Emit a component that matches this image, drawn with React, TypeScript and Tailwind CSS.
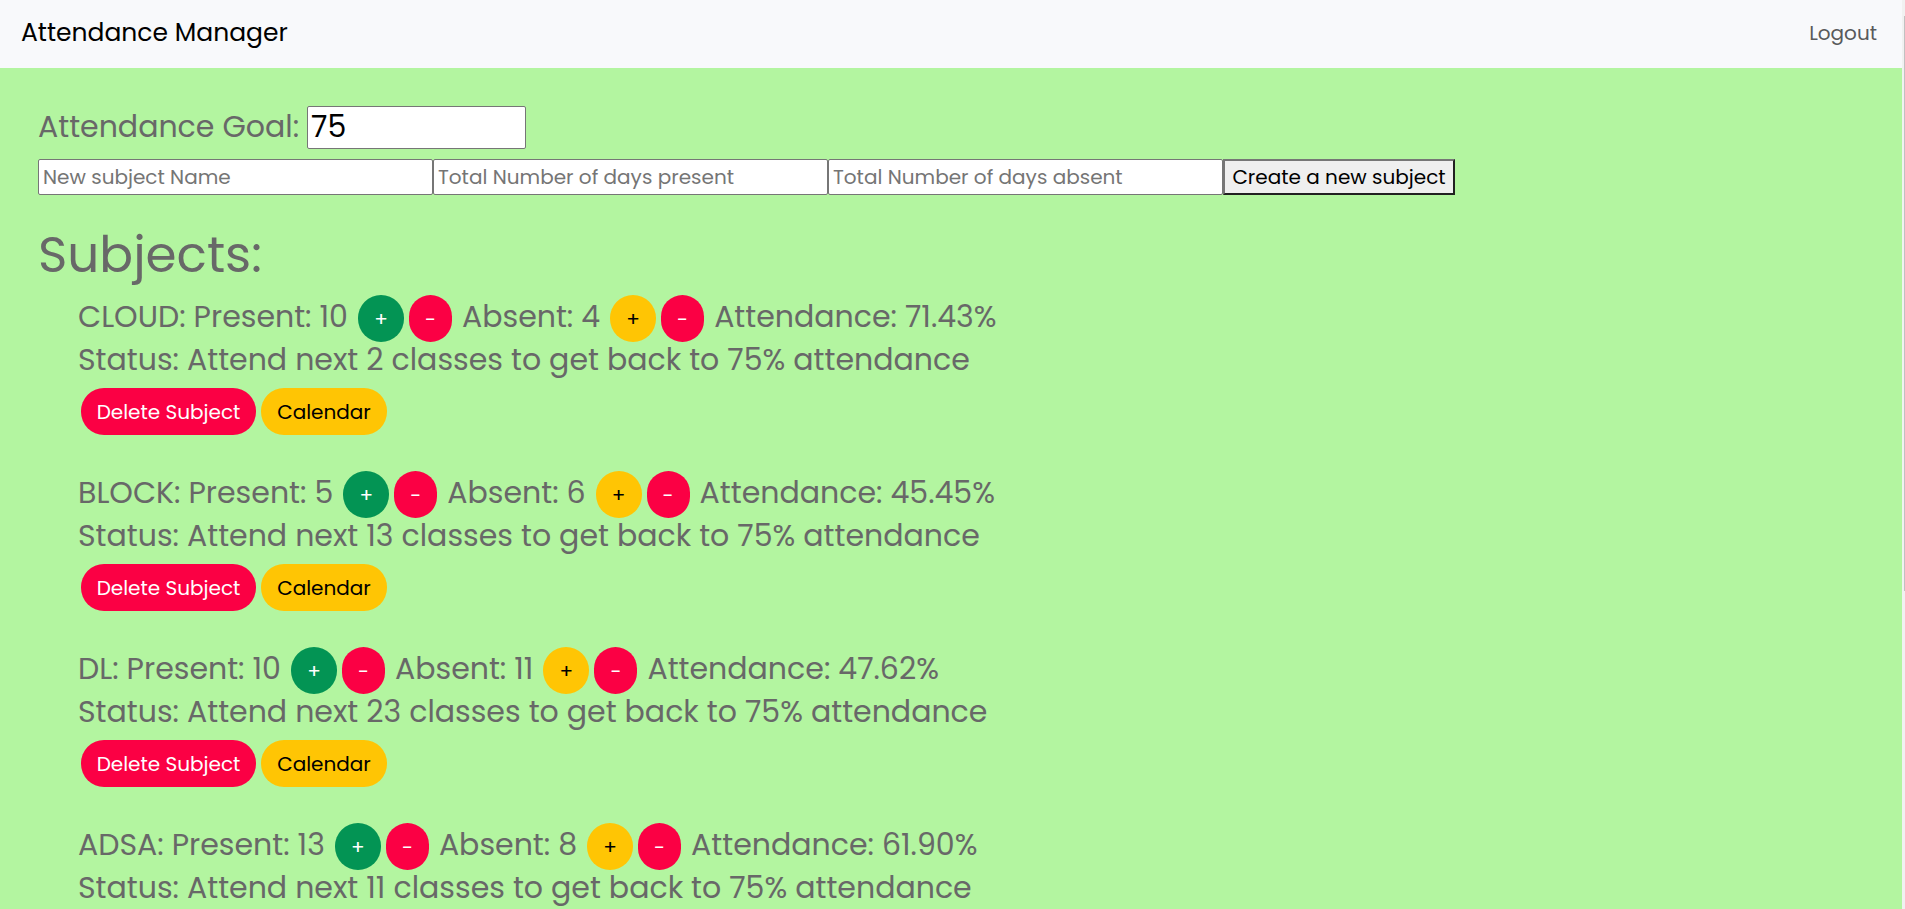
import { useState } from "react";

type Subject = { name: string; present: number; absent: number };

const initialSubjects: Subject[] = [
  { name: "CLOUD", present: 10, absent: 4 },
  { name: "BLOCK", present: 5, absent: 6 },
  { name: "DL", present: 10, absent: 11 },
  { name: "ADSA", present: 13, absent: 8 },
];

const pill = "h-[47px] shrink-0 rounded-[23px] text-xl leading-none";
const field =
  "h-[36px] w-[395px] rounded-[2px] border border-[#767676] bg-white px-1 text-xl text-black placeholder:text-[#757575]";

function statusText(s: Subject, goal: number) {
  const needed = Math.ceil(
    (goal * (s.present + s.absent) - 100 * s.present) / (100 - goal),
  );
  return needed > 0
    ? `Attend next ${needed} classes to get back to ${goal}% attendance`
    : "On track";
}

function Counter({
  label,
  addClass,
  onChange,
}: {
  label: string;
  addClass: string;
  onChange: (delta: number) => void;
}) {
  return (
    <span className="mx-[10px] inline-flex gap-[5px]">
      <button
        type="button"
        aria-label={`Increase ${label}`}
        onClick={() => onChange(1)}
        className={`${pill} w-[46px] ${addClass}`}
      >
        +
      </button>
      <button
        type="button"
        aria-label={`Decrease ${label}`}
        onClick={() => onChange(-1)}
        className={`${pill} w-[43px] bg-[#fb0044] text-white`}
      >
        -
      </button>
    </span>
  );
}

export default function App() {
  const [goal, setGoal] = useState("75");
  const [subjects, setSubjects] = useState(initialSubjects);

  const update = (index: number, key: "present" | "absent", delta: number) =>
    setSubjects((all) =>
      all.map((s, i) =>
        i === index ? { ...s, [key]: Math.max(0, s[key] + delta) } : s,
      ),
    );

  return (
    <div className="flex h-screen overflow-hidden font-[Poppins,Inter,sans-serif] text-[#686868]">
      <div className="flex min-w-0 grow flex-col bg-[#b3f5a0]">
        <nav className="flex h-[68px] shrink-0 items-center justify-between bg-[#f8f9fb] pr-[25px] pb-[2px] pl-[21px]">
          <a href="#" className="text-[25px] text-black">
            Attendance Manager
          </a>
          <a href="#" className="text-xl text-[#595a5b]">
            Logout
          </a>
        </nav>

        <main className="min-h-0 grow overflow-hidden px-[38px] pt-[38px] text-[30px]">
          <div className="flex gap-2">
            <label htmlFor="goal" className="leading-[41px]">
              Attendance Goal:
            </label>
            <input
              id="goal"
              value={goal}
              onChange={(e) => setGoal(e.target.value)}
              className="h-[43px] w-[219px] rounded-[2px] border border-[#767676] bg-white px-[3px] pb-[2px] text-black"
            />
          </div>

          <form className="mt-[10px] flex" onSubmit={(e) => e.preventDefault()}>
            <input className={field} placeholder="New subject Name" aria-label="New subject Name" />
            <input
              className={field}
              placeholder="Total Number of days present"
              aria-label="Total Number of days present"
            />
            <input
              className={field}
              placeholder="Total Number of days absent"
              aria-label="Total Number of days absent"
            />
            <button
              type="submit"
              className="h-[36px] w-[232px] border-2 border-t-[#767676] border-r-[#212121] border-b-[#212121] border-l-[#767676] bg-[#efefef] text-xl leading-none whitespace-nowrap text-black"
            >
              Create a new subject
            </button>
          </form>

          <h1 className="mt-[30px] text-[50px] leading-[60px]">Subjects:</h1>

          <ul className="mt-[10px] pl-[40px]">
            {subjects.map((s, i) => (
              <li key={s.name} className="mb-[36px] whitespace-nowrap">
                <div className="flex h-[47px] leading-[43px]">
                  <span>
                    {s.name}: Present: {s.present}
                  </span>
                  <Counter
                    label="present"
                    addClass="bg-[#039454] text-white"
                    onChange={(d) => update(i, "present", d)}
                  />
                  <span>Absent: {s.absent}</span>
                  <Counter
                    label="absent"
                    addClass="bg-[#ffc504] text-black"
                    onChange={(d) => update(i, "absent", d)}
                  />
                  <span>
                    Attendance: {((100 * s.present) / (s.present + s.absent)).toFixed(2)}%
                  </span>
                </div>
                <p className="h-[46px] leading-[36px]">Status: {statusText(s, Number(goal))}</p>
                <div className="flex gap-[5px] pl-[3px]">
                  <button
                    type="button"
                    onClick={() => setSubjects((all) => all.filter((_, j) => j !== i))}
                    className={`${pill} w-[175px] bg-[#fb0044] text-white`}
                  >
                    Delete Subject
                  </button>
                  <button type="button" className={`${pill} w-[126px] bg-[#ffc504] text-black`}>
                    Calendar
                  </button>
                </div>
              </li>
            ))}
          </ul>
        </main>
      </div>

      <div className="flex w-[3px] shrink-0 flex-col items-end bg-[#f1f1f1] pt-[16px]" aria-hidden="true">
        <div className="h-[575px] w-px bg-[#c1c1c1]" />
      </div>
    </div>
  );
}
